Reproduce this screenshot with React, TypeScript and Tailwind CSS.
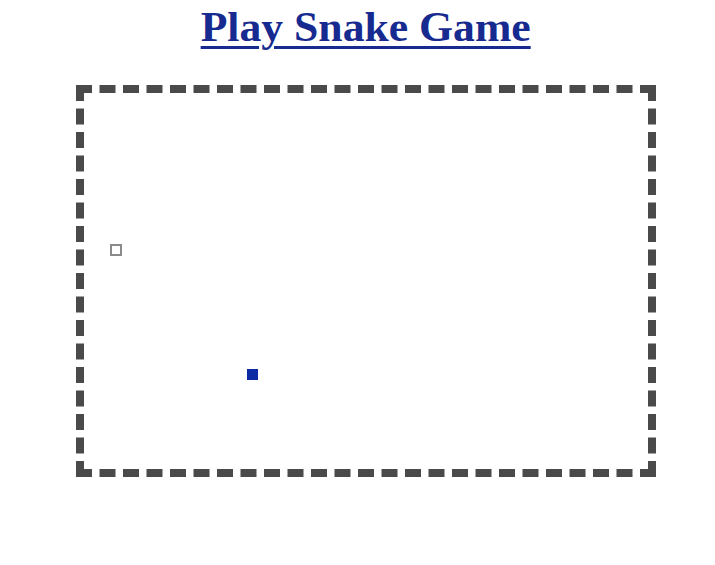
export default function App() {
  return (
    <div className="min-h-[565px] bg-white" style={{ fontFamily: '"Liberation Serif", "Times New Roman", serif' }}>
      <div className="ml-[76px] flex w-[580px] justify-center pt-[4px]">
        <h1 className="origin-center scale-x-[1.04] text-[42px] leading-[47px] font-bold text-[#172a90] underline decoration-[3px] underline-offset-[5px]">
          Play Snake Game
        </h1>
      </div>
      <div className="relative mt-[34px] ml-[76px] h-[392px] w-[580px] border-8 border-dashed border-[#4a4a4a]">
        <div className="absolute left-[26px] top-[151px] h-[12px] w-[12px] border-2 border-[#8a8a8a]" />
        <div className="absolute left-[163px] top-[276px] h-[11px] w-[11px] bg-[#0b2aa3]" />
      </div>
    </div>
  );
}
